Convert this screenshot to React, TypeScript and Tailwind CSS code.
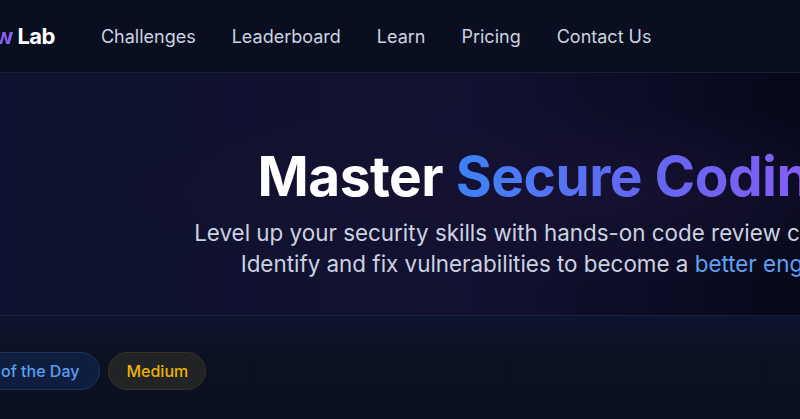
import React from 'react';

const navItems = ['Challenges', 'Leaderboard', 'Learn', 'Pricing', 'Contact Us'];

export default function App() {
  return (
    <div className="h-[419px] w-[800px] overflow-hidden bg-[#0c1122] font-['Inter',sans-serif]">
      {/* header */}
      <header className="flex h-[73px] items-center border-b border-[#1a1f35] bg-[#0a0f20]">
        <a className="ml-[-116px] text-[22px] font-bold tracking-tight text-white">
          <span className="bg-gradient-to-r from-[#3b82f6] to-[#8b5cf6] bg-clip-text text-transparent">CodeReview</span> Lab
        </a>
        <nav className="ml-[46px] flex items-center gap-9">
          {navItems.map((item) => (
            <a key={item} className="text-[18px] text-[#cdd3e1]">
              {item}
            </a>
          ))}
        </nav>
      </header>

      {/* hero */}
      <section className="h-[243px] border-b border-[#1f1d3d] bg-[radial-gradient(ellipse_at_70%_50%,#161132_0%,transparent_55%),linear-gradient(90deg,#0f1230_0%,#121131_60%,#0b0b22_85%,#060818_100%)]">
        <div className="flex w-[1102px] flex-col items-center pt-[71px] text-center">
          <h1 className="font-['Inter',sans-serif] text-[55px] font-bold leading-[64px] tracking-[-0.5px] text-white">
            Master{' '}
            <span className="bg-gradient-to-r from-[#3b82f6] via-[#6366f1] to-[#8b5cf6] bg-clip-text text-transparent">
              Secure Coding
            </span>
          </h1>
          <p className="mt-[9px] text-[22.4px] leading-[31px] text-[#cbd2e0]">
            Level up your security skills with hands-on code review challenges.
            <br />
            Identify and fix vulnerabilities to become a <span className="text-[#5ea3f5]">better engineer.</span>
          </p>
        </div>
      </section>

      {/* challenge meta */}
      <div className="bg-gradient-to-b from-[#0e1430] to-[#0c1122] to-[40px]">
        <div className="flex items-center gap-2 pt-[36px]">
          <span className="ml-[-101px] rounded-full border border-[#1b3461] bg-[#0f1e3e] px-5 py-[6px] text-[16px] font-medium text-[#5a9ef0]">
            Challenge of the Day
          </span>
          <span className="rounded-full border border-[#3a3322] bg-[#222325] px-[17px] py-[6px] text-[16px] font-medium text-[#eab308]">
            Medium
          </span>
        </div>
      </div>
    </div>
  );
}
